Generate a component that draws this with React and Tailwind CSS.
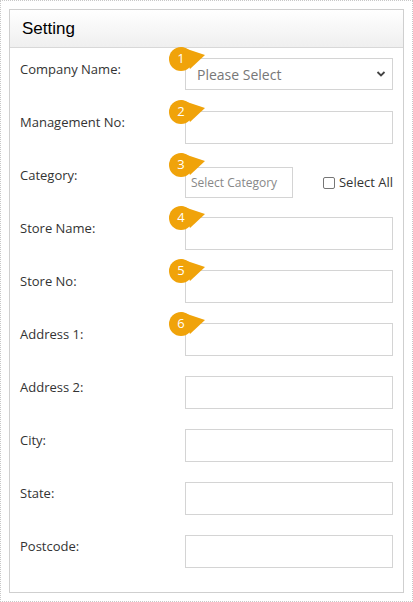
import React from "react";

function Badge({ n }) {
  return (
    <div className="absolute left-[-19px] top-[-12px] w-[42px] h-[28px]">
      <svg width="42" height="28" viewBox="0 0 42 28" className="absolute inset-0">
        <circle cx="15" cy="13" r="12" fill="#f0a30a" />
        <path d="M15 1 L39 9 L24 23 Z" fill="#f0a30a" />
      </svg>
      <span className="absolute left-[9px] top-[3px] w-[12px] text-center text-white text-[13px] leading-[18px]" style={{ fontFamily: "'Open Sans', sans-serif" }}>{n}</span>
    </div>
  );
}

const rows = [
  ["Company Name:", "select", 1],
  ["Management No:", "input", 2],
  ["Category:", "category", 3],
  ["Store Name:", "input", 4],
  ["Store No:", "input", 5],
  ["Address 1:", "input", 6],
  ["Address 2:", "input"],
  ["City:", "input"],
  ["State:", "input"],
  ["Postcode:", "input"],
];

export default function App() {
  return (
    <div className="w-[413px] h-[602px] bg-white border border-dotted border-[#c8c8c8] p-[8px]" style={{ fontFamily: "'Open Sans', sans-serif" }}>
      <div className="h-full border border-[#cfcfcf] flex flex-col">
        <div className="h-[38px] border-b border-[#d8d8d8] bg-gradient-to-b from-white to-[#efefef] px-[12px] flex items-center text-[17px] text-black" style={{ fontFamily: "'Liberation Sans', Arial, sans-serif" }}>
          Setting
        </div>
        <div className="flex flex-col gap-[20px] pt-[10px] pl-[10px] pr-[10px]">
          {rows.map(([label, type, n], i) => (
            <div key={i} className="flex items-start h-[33px]">
              <div className="w-[165px] pt-[1px] text-[13px] text-[#333] leading-[20px]">{label}</div>
              <div className="relative flex-1 flex items-center">
                {n && <Badge n={n} />}
                {type === "select" && (
                  <div className="w-full h-[32px] border border-[#d4d4d4] flex items-center justify-between pl-[11px] pr-[6px] text-[14px] text-[#777]">
                    <span>Please Select</span>
                    <svg width="10" height="8" viewBox="0 0 10 8"><path d="M1.5 2 L5 5.5 L8.5 2" stroke="#444" strokeWidth="1.8" fill="none" /></svg>
                  </div>
                )}
                {type === "input" && <div className="w-full h-[33px] border border-[#d4d4d4]" />}
                {type === "category" && (
                  <div className="w-full flex items-center justify-between mt-[3px]">
                    <div className="w-[108px] h-[31px] border border-[#d4d4d4] flex items-center pl-[5px] text-[12px] text-[#888] overflow-hidden whitespace-nowrap">Select Category</div>
                    <label className="flex items-center gap-[4px] text-[13px] text-[#333]">
                      <span className="w-[12px] h-[12px] border border-[#767676] rounded-[2px] bg-white" />
                      Select All
                    </label>
                  </div>
                )}
              </div>
            </div>
          ))}
        </div>
      </div>
    </div>
  );
}
